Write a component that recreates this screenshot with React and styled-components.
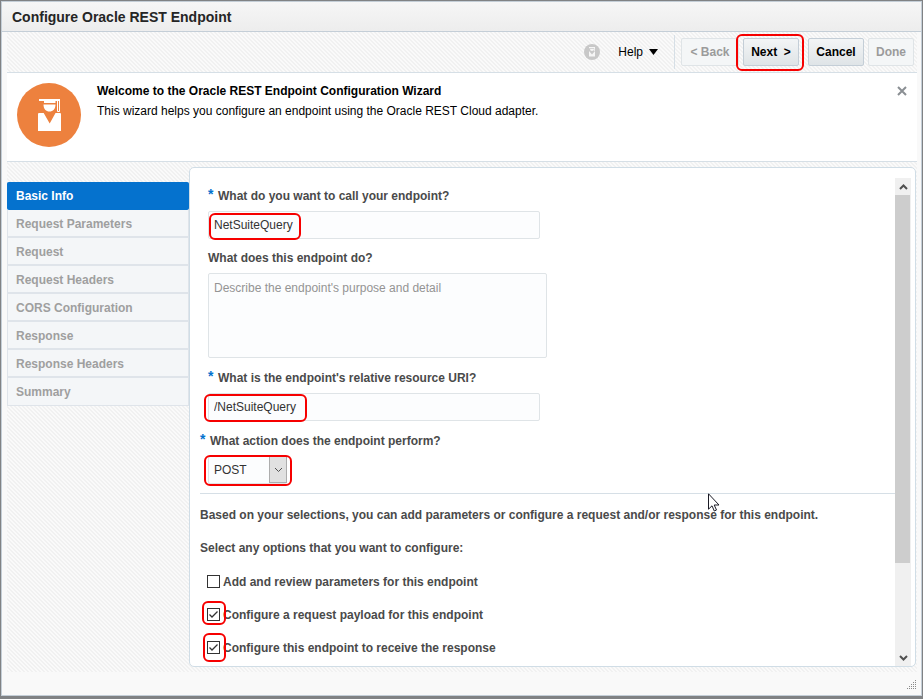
import React, { useState } from "react";
import styled, { createGlobalStyle, css } from "styled-components";

const GlobalStyle = createGlobalStyle`
  *, *::before, *::after { box-sizing: border-box; }
  body {
    margin: 0;
    background: #808284;
    font: 12px/16px "Liberation Sans", Arial, sans-serif;
    color: #4a4a4a;
  }
  button, input, select, textarea { font: inherit; }
`;

const Backdrop = styled.div`
  display: flex;
  min-height: 100vh;
  padding: 1px 1px 3px;
`;

const Dialog = styled.section`
  flex: 1;
  min-width: 0;
  display: flex;
  flex-direction: column;
  border: 1px solid #c4ced7;
  background: #f9f9f9;
`;

const TitleBar = styled.header`
  height: 30px;
  padding: 0 10px;
  display: flex;
  align-items: center;
  border-bottom: 1px solid #c4ced7;
  background: linear-gradient(#f6f6f6, #ededed);
`;

const Title = styled.h1`
  margin: 0;
  font-size: 14px;
  line-height: 18px;
  color: #252525;
`;

const Content = styled.div`
  flex: 1;
  display: flex;
  flex-direction: column;
  margin: 0 4px 0 5px;
`;

const hatch = css`
  background: linear-gradient(45deg, #fafafa 25%, #f1f1f1 25% 50%, #fafafa 50% 75%, #f1f1f1 75%) 0 0 / 4px 4px;
`;

const Toolbar = styled.div`
  ${hatch}
  height: 41px;
  padding: 0 3px;
  display: flex;
  align-items: center;
  justify-content: flex-end;
  border-bottom: 1px solid #d6dfe6;
`;

const HelpMenu = styled.button`
  display: flex;
  align-items: center;
  gap: 6px;
  margin: 0 16px 0 18px;
  padding: 0;
  border: 0;
  background: none;
  color: #000;
`;

const ButtonGroup = styled.div`
  display: flex;
  align-items: center;
  gap: 4px;
  height: 34px;
  padding-left: 6px;
  border-left: 1px solid #d6dfe6;
`;

const Button = styled.button`
  height: 28px;
  min-width: ${(p) => p.$min || "46px"};
  padding: 0 7px;
  border: 1px solid #c4ced7;
  border-radius: 2px;
  background: linear-gradient(#f3f5f6, #dfe4e7);
  color: #000;
  font-weight: bold;
  white-space: nowrap;
  &:disabled {
    border-color: #dfe4e7;
    background: #f4f6f7;
    color: #9b9b9b;
  }
`;

const Marked = styled.div`
  position: relative;
  display: flex;
  width: ${(p) => (p.$fit ? "fit-content" : "auto")};
  margin: ${(p) => p.$margin || 0};
  &::after {
    content: "";
    position: absolute;
    inset: ${(p) => p.$inset};
    width: ${(p) => p.$width || "auto"};
    border: 2px solid #f60000;
    border-radius: 6px;
    pointer-events: none;
  }
`;

const Banner = styled.div`
  height: 89px;
  padding: 10px;
  display: flex;
  gap: 16px;
  border-bottom: 1px solid #d6dfe6;
  background: #fff;
`;

const BannerText = styled.div`
  flex: 1;
  color: #000;
  line-height: 20px;
  margin-top: -2px;
  h2, p { margin: 0; font-size: 12px; }
`;

const CloseButton = styled.button`
  align-self: flex-start;
  display: flex;
  padding: 3px 0;
  border: 0;
  background: none;
`;

const Body = styled.div`
  ${hatch}
  flex: 1;
  display: flex;
  padding: 5px 1px 5px 0;
`;

const Steps = styled.nav`
  width: 182px;
  padding-top: 15px;
`;

const Step = styled.a`
  display: block;
  height: 28px;
  padding: 0 8px;
  border: 1px solid #dfe4ea;
  border-bottom-width: ${(p) => (p.$last ? "1px" : "2px")};
  border-top-width: 0;
  background: #f4f6f8;
  color: #9f9f9f;
  font-weight: bold;
  line-height: 28px;
  text-decoration: none;
  &[aria-current] {
    border-color: #0572ce;
    border-radius: 2px;
    background: #0572ce;
    color: #fff;
  }
`;

const Panel = styled.main`
  flex: 1;
  min-width: 0;
  display: flex;
  padding: 9px 4px 0 10px;
  border: 1px solid #d0dde6;
  border-radius: 5px;
  background: #fff;
`;

const Form = styled.form`
  position: relative;
  flex: 1;
  min-width: 0;
  font-weight: bold;
`;

const Fields = styled.div`
  padding-left: 8px;
`;

const Label = styled.label`
  display: flex;
  height: 34px;
  padding-top: 11px;
  margin-left: ${(p) => (p.$outdent ? "-8px" : 0)};
`;

const Star = styled.span`
  width: 10px;
  color: #0572ce;
  font-size: 14px;
  line-height: 12px;
`;

const control = css`
  border: 1px solid #dfe4e7;
  border-radius: 2px;
  background: #fcfdfe;
  color: #333;
  font-weight: normal;
`;

const TextInput = styled.input`
  ${control}
  width: 332px;
  max-width: 100%;
  height: 28px;
  padding: 0 5px;
`;

const TextArea = styled.textarea`
  ${control}
  display: block;
  width: 339px;
  max-width: 100%;
  height: 85px;
  margin-bottom: 1px;
  padding: 6px 5px;
  resize: none;
  &::placeholder { color: #949494; }
`;

const Select = styled.select`
  ${control}
  appearance: none;
  width: 79px;
  height: 28px;
  padding: 0 5px;
`;

const SelectArrow = styled.span`
  position: absolute;
  top: 0;
  right: 0;
  width: 18px;
  height: 27px;
  display: grid;
  place-items: center;
  border: 1px solid #adadad;
  background: #e1e1e1;
  pointer-events: none;
`;

const Options = styled.div`
  margin-top: 9px;
  padding-top: 5px;
  border-top: 1px solid #d6dfe6;
  p { margin: 0; line-height: 33px; }
`;

const Option = styled.div`
  display: flex;
  align-items: center;
  gap: 3px;
  height: 33px;
  padding-left: 7px;
`;

const Checkbox = styled.input`
  appearance: none;
  width: 13px;
  height: 13px;
  margin: 0;
  border: 1px solid #333;
  background: #fff;
`;

const Tick = styled.svg`
  position: absolute;
  inset: 0;
  pointer-events: none;
`;

const ScrollTrack = styled.div`
  width: 16px;
  margin-top: 1px;
  display: flex;
  flex-direction: column;
  align-items: center;
  background: #f0f0f0;
`;

const ScrollCap = styled.span`
  height: 17px;
  display: grid;
  place-items: center;
`;

const ScrollRun = styled.div`
  flex: 1;
  width: 100%;
  padding-right: 1px;
`;

const ScrollThumb = styled.div`
  height: 81%;
  background: #cdcdcd;
`;

const Pointer = styled.svg`
  position: absolute;
  left: 508px;
  top: 316px;
  pointer-events: none;
`;

const Footer = styled.footer`
  height: 23px;
  display: flex;
  justify-content: flex-end;
  align-items: flex-end;
  padding: 0 5px 6px;
`;

const STEPS = [
  "Basic Info", "Request Parameters", "Request", "Request Headers",
  "CORS Configuration", "Response", "Response Headers", "Summary",
];

function GraduateIcon() {
  return (
    <svg width="64" height="64" viewBox="0 0 64 64" aria-hidden="true">
      <circle cx="32" cy="32" r="32" fill="#ed813e" />
      <path fill="#fff" d="M22 16h21v2H22zM27 18h11.500v2H27zM26.500 21.500h12c0 4.500-2.500 7-6 7s-6-2.500-6-7zM21 31q0-1 1-1h4.700l6 10.500 5.800-10.500H43q1 0 1 1v17H21z" />
      <path d="M40.500 18v10.500h2V18" fill="none" stroke="#fff" />
    </svg>
  );
}

function HelpBadge() {
  return (
    <svg width="16" height="16" viewBox="0 0 16 16" aria-hidden="true">
      <circle cx="8" cy="8" r="8" fill="#c8c8c8" />
      <path fill="#f6f6f6" d="M5 3h6v1.200H5zM6 5h4q0 2-2 2T6 5zM10.200 4h.8v3h-.8zM5 7l3 3.500L11 7v5.500H5z" />
    </svg>
  );
}

function Chevron({ up, stroke = 2, color = "#505050" }) {
  return (
    <svg width="9" height="6" viewBox="0 0 9 6" aria-hidden="true">
      <path d={up ? "M1 5l3.500-3.500L8 5" : "M1 1l3.500 3.500L8 1"} fill="none" stroke={color} strokeWidth={stroke} />
    </svg>
  );
}

function CheckOption({ id, label, inset, initial }) {
  const [on, setOn] = useState(initial);
  const box = (
    <>
      <Checkbox id={id} type="checkbox" checked={on} onChange={() => setOn(!on)} />
      {on && (
        <Tick width="13" height="13" viewBox="0 0 13 13" aria-hidden="true">
          <path d="M2.500 6.500L5 9l5.500-5.500" fill="none" stroke="#333" strokeWidth="1.300" />
        </Tick>
      )}
    </>
  );
  return (
    <Option>
      {inset ? <Marked $inset={inset}>{box}</Marked> : box}
      <label htmlFor={id}>{label}</label>
    </Option>
  );
}

export default function App() {
  return (
    <Backdrop>
      <GlobalStyle />
      <Dialog aria-labelledby="title">
        <TitleBar><Title id="title">Configure Oracle REST Endpoint</Title></TitleBar>
        <Content>
          <Toolbar>
            <HelpBadge />
            <HelpMenu type="button">
              Help
              <svg width="9" height="6" viewBox="0 0 9 6" aria-hidden="true"><path d="M0 0h9L4.500 6z" /></svg>
            </HelpMenu>
            <ButtonGroup>
              <Button disabled $min="58px">&lt; Back</Button>
              <Marked $inset="-4px -5px -5px -7px" $margin="0 5px 0 0"><Button $min="56px">Next &nbsp;&gt;</Button></Marked>
              <Button $min="56px">Cancel</Button>
              <Button disabled>Done</Button>
            </ButtonGroup>
          </Toolbar>
          <Banner>
            <GraduateIcon />
            <BannerText>
              <h2>Welcome to the Oracle REST Endpoint Configuration Wizard</h2>
              <p>This wizard helps you configure an endpoint using the Oracle REST Cloud adapter.</p>
            </BannerText>
            <CloseButton aria-label="Close">
              <svg width="10" height="10" viewBox="0 0 10 10"><path d="M1 1l8 8M9 1l-8 8" stroke="#8a8f93" strokeWidth="2" /></svg>
            </CloseButton>
          </Banner>
          <Body>
            <Steps aria-label="Wizard steps">
              {STEPS.map((s, i) => (
                <Step key={s} href="#" aria-current={i === 0 ? "step" : undefined} $last={i === STEPS.length - 1}>{s}</Step>
              ))}
            </Steps>
            <Panel>
              <Form>
                <Fields>
                  <Label htmlFor="name"><Star>*</Star>What do you want to call your endpoint?</Label>
                  <Marked $inset="2px auto -1px 1px" $width="92px">
                    <TextInput id="name" defaultValue="NetSuiteQuery" />
                  </Marked>
                  <Label htmlFor="purpose">What does this endpoint do?</Label>
                  <TextArea id="purpose" placeholder="Describe the endpoint's purpose and detail" />
                  <Label htmlFor="uri"><Star>*</Star>What is the endpoint's relative resource URI?</Label>
                  <Marked $inset="1px auto -1px -4px" $width="103px" $margin="0 0 1px">
                    <TextInput id="uri" defaultValue="/NetSuiteQuery" />
                  </Marked>
                  <Label htmlFor="action" $outdent><Star>*</Star>What action does the endpoint perform?</Label>
                  <Marked $fit $inset="-1px -5px -2px -4px">
                    <Select id="action" defaultValue="POST">
                      <option>GET</option><option>PUT</option><option>POST</option><option>DELETE</option>
                    </Select>
                    <SelectArrow><Chevron stroke={1} /></SelectArrow>
                  </Marked>
                </Fields>
                <Options>
                  <p>Based on your selections, you can add parameters or configure a request and/or response for this endpoint.</p>
                  <p>Select any options that you want to configure:</p>
                  <CheckOption id="params" label="Add and review parameters for this endpoint" initial={false} />
                  <CheckOption id="payload" label="Configure a request payload for this endpoint" inset="-7px -6px -4px -5px" initial />
                  <CheckOption id="response" label="Configure this endpoint to receive the response" inset="-8px -6px -8px -4px" initial />
                </Options>
                <Pointer width="12" height="19" viewBox="0 0 12 19" aria-hidden="true">
                  <path d="M.5.8v15.400l3.500-3.400 2.300 5.200 2.200-1-2.300-5h4.800z" fill="#fff" stroke="#1a1a24" />
                </Pointer>
              </Form>
              <ScrollTrack aria-hidden="true">
                <ScrollCap><Chevron up /></ScrollCap>
                <ScrollRun><ScrollThumb /></ScrollRun>
                <ScrollCap><Chevron /></ScrollCap>
              </ScrollTrack>
            </Panel>
          </Body>
        </Content>
        <Footer>
          <svg width="9" height="9" viewBox="0 0 9 9" fill="#8a8a8a" aria-hidden="true">
            {[0, 1, 2, 3, 4].flatMap((r) =>
              [0, 1, 2, 3, 4].filter((c) => c + r >= 4).map((c) => <rect key={`${r}-${c}`} x={c * 2} y={r * 2} width="1" height="1" />)
            )}
          </svg>
        </Footer>
      </Dialog>
    </Backdrop>
  );
}
